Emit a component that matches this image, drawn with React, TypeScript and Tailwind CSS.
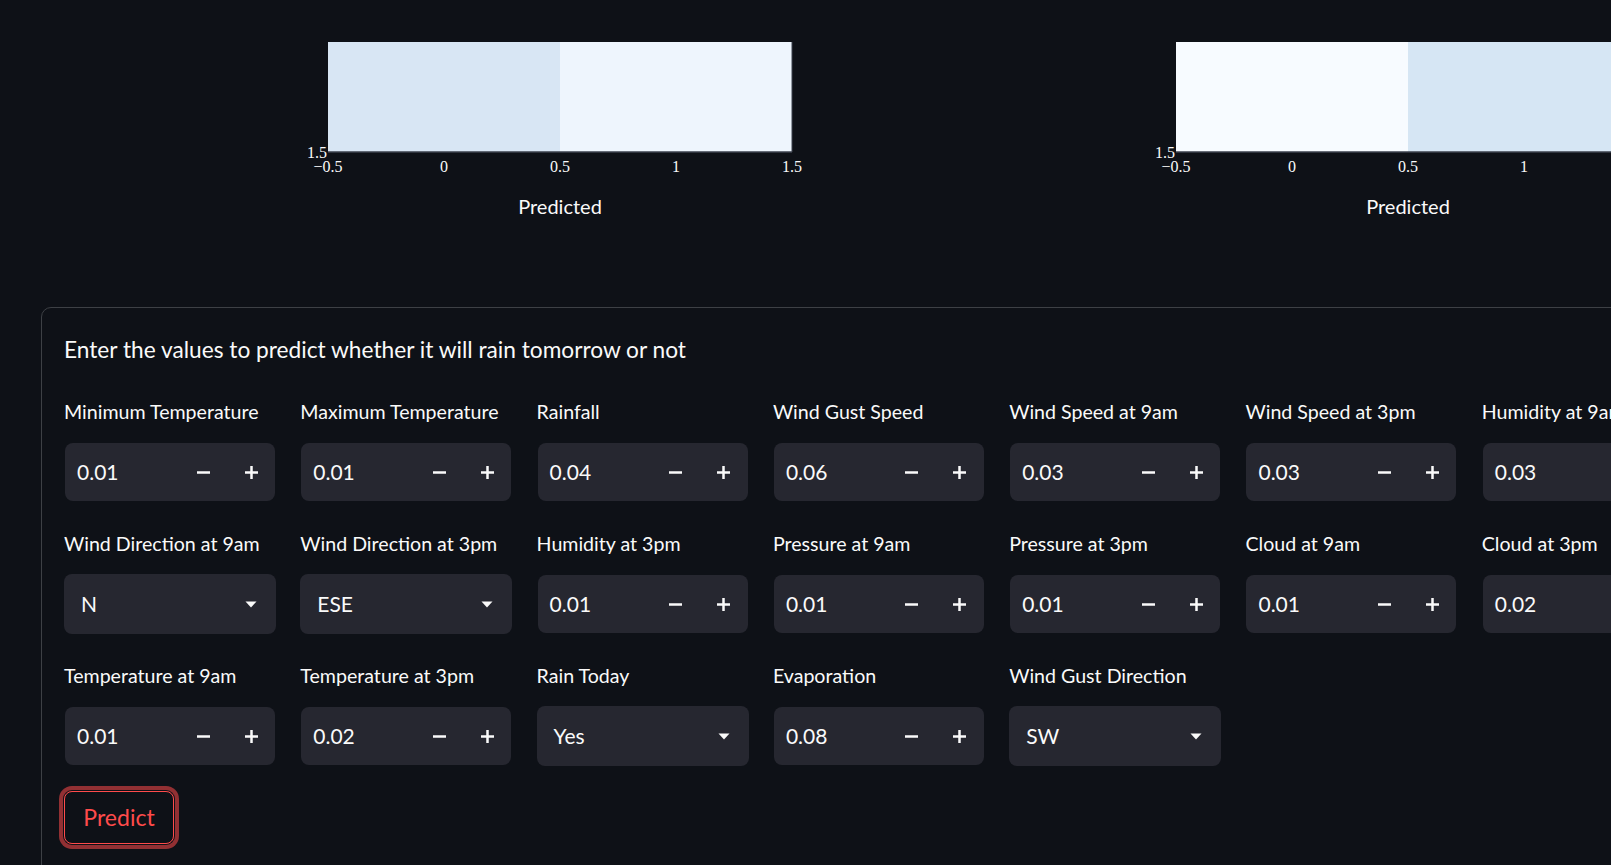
import React from 'react';

type Field =
    | { kind: 'number'; label: string; value: string }
    | { kind: 'select'; label: string; value: string };

const fields: Field[] = [
    { kind: 'number', label: 'Minimum Temperature', value: '0.01' },
    { kind: 'number', label: 'Maximum Temperature', value: '0.01' },
    { kind: 'number', label: 'Rainfall', value: '0.04' },
    { kind: 'number', label: 'Wind Gust Speed', value: '0.06' },
    { kind: 'number', label: 'Wind Speed at 9am', value: '0.03' },
    { kind: 'number', label: 'Wind Speed at 3pm', value: '0.03' },
    { kind: 'number', label: 'Humidity at 9am', value: '0.03' },
    { kind: 'select', label: 'Wind Direction at 9am', value: 'N' },
    { kind: 'select', label: 'Wind Direction at 3pm', value: 'ESE' },
    { kind: 'number', label: 'Humidity at 3pm', value: '0.01' },
    { kind: 'number', label: 'Pressure at 9am', value: '0.01' },
    { kind: 'number', label: 'Pressure at 3pm', value: '0.01' },
    { kind: 'number', label: 'Cloud at 9am', value: '0.01' },
    { kind: 'number', label: 'Cloud at 3pm', value: '0.02' },
    { kind: 'number', label: 'Temperature at 9am', value: '0.01' },
    { kind: 'number', label: 'Temperature at 3pm', value: '0.02' },
    { kind: 'select', label: 'Rain Today', value: 'Yes' },
    { kind: 'number', label: 'Evaporation', value: '0.08' },
    { kind: 'select', label: 'Wind Gust Direction', value: 'SW' },
];

const ticks = ['\u22120.5', '0', '0.5', '1', '1.5'];

// plotly-style 1x2 heatmap, drawn at the position streamlit gave it
const Heatmap: React.FC<{ left: string; right: string }> = ({ left, right }) => (
    <svg width="848" height="240" className="block">
        <rect x="288" y="42" width="232" height="110" fill={left} />
        <rect x="520" y="42" width="232" height="110" fill={right} />
        <line x1="288" y1="152" x2="752" y2="152" stroke="#3b404c" strokeWidth="1.5" />
        <line x1="752" y1="42" x2="752" y2="152" stroke="#3b404c" strokeWidth="1" />
        <text x="287" y="158" textAnchor="end" fontFamily="'Liberation Serif', serif" fontSize="16" fill="#fafafa">
            1.5
        </text>
        {ticks.map((t, i) => (
            <text
                key={t}
                x={288 + i * 116}
                y="171.5"
                textAnchor="middle"
                fontFamily="'Liberation Serif', serif"
                fontSize="16"
                fill="#fafafa"
            >
                {t}
            </text>
        ))}
        <text x="520" y="214" textAnchor="middle" fontFamily="Lato, sans-serif" fontSize="20" fill="#fafafa">
            Predicted
        </text>
    </svg>
);

const MinusIcon = () => (
    <svg width="13" height="13" viewBox="0 0 13 13">
        <rect x="0" y="5.25" width="13" height="2.5" fill="#fafafa" />
    </svg>
);

const PlusIcon = () => (
    <svg width="13" height="13" viewBox="0 0 13 13">
        <rect x="0" y="5.25" width="13" height="2.5" fill="#fafafa" />
        <rect x="5.25" y="0" width="2.5" height="13" fill="#fafafa" />
    </svg>
);

const Caret = () => (
    <svg width="12" height="7" viewBox="0 0 12 7">
        <path d="M0.5 0.5 L11.5 0.5 L6 6.5 Z" fill="#fafafa" />
    </svg>
);

const FieldBox: React.FC<{ field: Field }> = ({ field }) => (
    <div className="flex flex-col">
        <div className="h-[25px] leading-[25px] text-[19.6px] text-[#fafafa] whitespace-nowrap mb-[18px]">
            {field.label}
        </div>
        {field.kind === 'number' ? (
            <div className="h-[58px] my-px mx-px flex items-center rounded-[8px] bg-[#262730]">
                <span className="flex-1 pl-[12px] text-[21px]">{field.value}</span>
                <span className="w-[48px] h-full flex items-center justify-center">
                    <MinusIcon />
                </span>
                <span className="w-[48px] h-full flex items-center justify-center">
                    <PlusIcon />
                </span>
            </div>
        ) : (
            <div className="h-[60px] flex items-center rounded-[8px] bg-[#262730] pl-[17px] pr-[19px]">
                <span className="flex-1 text-[21px]">{field.value}</span>
                <Caret />
            </div>
        )}
    </div>
);

const App: React.FC = () => {
    return (
        <div className="h-screen w-full overflow-hidden bg-[#0e1117] text-[#fafafa] font-[Lato,sans-serif]">
            <div className="grid grid-cols-[848px_848px] pl-[40px] h-[240px]">
                <Heatmap left="#d8e6f4" right="#eef5fd" />
                <Heatmap left="#f7fbff" right="#d6e6f4" />
            </div>

            <div className="ml-[41px] mt-[67px] w-[1690px] h-[640px] rounded-[10px] border border-[#3d4045] px-[22px] pt-[27px]">
                <p className="h-[30px] leading-[30px] text-[22.7px] mb-[34px] whitespace-nowrap">
                    Enter the values to predict whether it will rain tomorrow or not
                </p>

                <div className="grid grid-cols-[repeat(7,212px)] gap-x-[24.3px] gap-y-[29px]">
                    {fields.map(f => (
                        <FieldBox key={f.label} field={f} />
                    ))}
                </div>

                <button className="mt-[25px] w-[110px] h-[53px] rounded-[8px] border border-[#ff4b4b] text-[#ff4b4b] text-[23px] ring-4 ring-[#ff4b4b]/55 ring-offset-1 ring-offset-[#0e1117]">
                    Predict
                </button>
            </div>
        </div>
    );
};

export default App;
